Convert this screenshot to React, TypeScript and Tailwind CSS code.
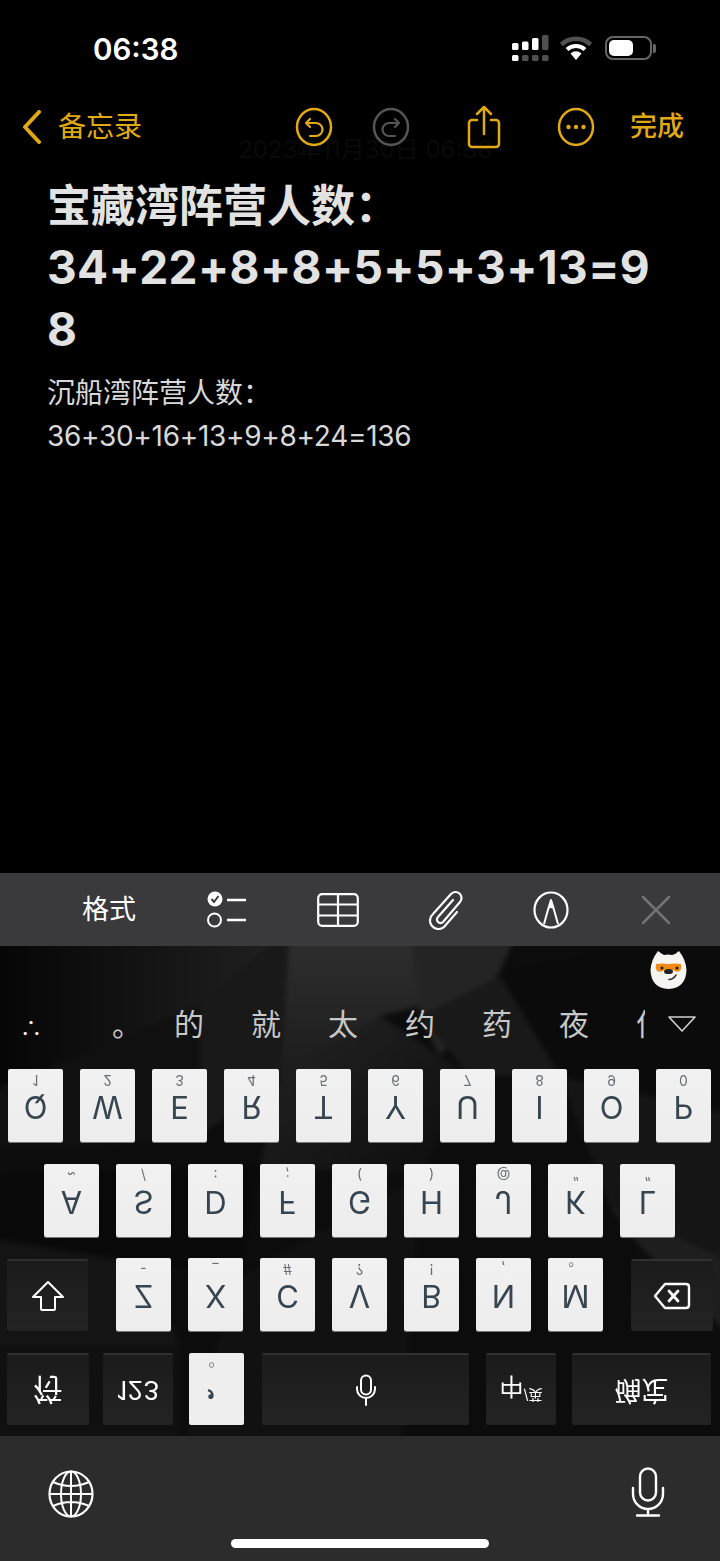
const Y = "#e2a916";
const font = { fontFamily: '"Inter","Noto Sans CJK SC",sans-serif' };

function Key({ main, hint }: { main: string; hint: string }) {
  return (
    <div className="relative w-[55px] h-[73px] rounded-[2px] bg-gradient-to-b from-[#f1f1f1] to-[#ededed] shadow-[0_1px_0_#777] flex flex-col items-center">
      <span className="-scale-y-100 h-[20px] leading-[20px] mt-[1px] text-[14px] text-[#6a6f74]">{hint}</span>
      <span className="-scale-y-100 h-[34px] leading-[34px] text-[31px] text-[#36454f] font-normal">{main}</span>
    </div>
  );
}

function Dark({ children, cls }: { children: React.ReactNode; cls: string }) {
  return (
    <div className={`h-[72px] rounded-[2px] bg-gradient-to-b from-[#1b1b1b] to-[#232323] border-t-2 border-[#303030] flex items-center justify-center text-white ${cls}`}>
      {children}
    </div>
  );
}

export default function App() {
  const r1 = [["Q", "1"], ["W", "2"], ["E", "3"], ["R", "4"], ["T", "5"], ["Y", "6"], ["U", "7"], ["I", "8"], ["O", "9"], ["P", "0"]];
  const r2 = [["A", "~"], ["S", "/"], ["D", ":"], ["F", ";"], ["G", "("], ["H", ")"], ["J", "@"], ["K", "“"], ["L", "”"]];
  const r3 = [["Z", "-"], ["X", "_"], ["C", "#"], ["V", "?"], ["B", "!"], ["N", ","], ["M", "。"]];
  return (
    <div className="w-[720px] h-[1561px] bg-black flex flex-col overflow-hidden relative" style={font}>
      {/* status bar */}
      <div className="h-[97px] flex items-start shrink-0">
        <div className="ml-[93px] mt-[30px] text-[29.5px] leading-[38px] font-semibold text-white">06:38</div>
        <div className="ml-auto mr-[64px] mt-[35px] flex items-center">
          <svg width="37" height="26" viewBox="0 0 37 26">
            <rect x="0" y="8" width="6.5" height="7" rx="1.5" fill="#fff" />
            <rect x="10" y="6.5" width="6.5" height="8.5" rx="1.5" fill="#fff" />
            <rect x="20" y="3" width="6.5" height="12" rx="1.5" fill="#fff" />
            <rect x="30" y="0" width="6.5" height="15" rx="1.5" fill="#505050" />
            <rect x="0" y="20" width="6.5" height="6" rx="1.5" fill="#fff" />
            <rect x="10" y="20" width="6.5" height="6" rx="1.5" fill="#505050" />
            <rect x="20" y="20" width="6.5" height="6" rx="1.5" fill="#505050" />
            <rect x="30" y="20" width="6.5" height="6" rx="1.5" fill="#505050" />
          </svg>
          <svg width="32" height="24" viewBox="0 0 32 24" className="ml-[11px]">
            <path d="M1.5 8.5 A21 21 0 0 1 30.5 8.5" fill="none" stroke="#505050" strokeWidth="4.5" />
            <path d="M7 13.5 A13 13 0 0 1 25 13.5" fill="none" stroke="#fff" strokeWidth="4" />
            <path d="M16 24 L10.5 17.5 A8 8 0 0 1 21.5 17.5 Z" fill="#fff" />
          </svg>
          <div className="flex items-center ml-[13px]">
            <div className="w-[47px] h-[24px] rounded-[8px] border-2 border-[#666] p-[2px]">
              <div className="w-[24px] h-full rounded-[5px] bg-white" />
            </div>
            <div className="w-[3px] h-[9px] rounded-r-[2px] bg-[#666] ml-[1px]" />
          </div>
        </div>
      </div>

      {/* faint date under the nav */}
      <div className="absolute left-[238px] top-[135px] text-[24px] leading-[30px] text-[#0a0a0a] whitespace-nowrap">2023年11月30日 06:38</div>

      {/* nav */}
      <div className="h-[60px] shrink-0 flex items-center relative" style={{ color: Y }}>
        <svg width="20" height="34" viewBox="0 0 20 34" className="ml-[22px]">
          <path d="M17 2 L3 17 L17 32" fill="none" stroke={Y} strokeWidth="4" strokeLinecap="round" strokeLinejoin="round" />
        </svg>
        <span className="ml-[16px] text-[28px] leading-[36px] w-[84px] whitespace-nowrap">备忘录</span>
        <svg width="38" height="40" viewBox="0 0 38 40" className="ml-[153px]">
          <ellipse cx="19" cy="20" rx="17" ry="18" fill="none" stroke={Y} strokeWidth="2.5" />
          <path d="M15 12 L11 16 L15 20 M11 16 H21 A6.5 6.5 0 0 1 21 29 H15" fill="none" stroke={Y} strokeWidth="2.2" strokeLinecap="round" strokeLinejoin="round" />
        </svg>
        <svg width="38" height="40" viewBox="0 0 38 40" className="ml-[39px]">
          <ellipse cx="19" cy="20" rx="17" ry="18" fill="none" stroke="#555" strokeWidth="2.5" />
          <path d="M23 12 L27 16 L23 20 M27 16 H17 A6.5 6.5 0 0 0 17 29 H23" fill="none" stroke="#555" strokeWidth="2.2" strokeLinecap="round" strokeLinejoin="round" />
        </svg>
        <svg width="34" height="44" viewBox="0 0 34 44" className="ml-[57px]">
          <path d="M10 15 H5 A3 3 0 0 0 2 18 V39 A3 3 0 0 0 5 42 H29 A3 3 0 0 0 32 39 V18 A3 3 0 0 0 29 15 H24 M17 29 V2 M10 9 L17 2 L24 9" fill="none" stroke={Y} strokeWidth="2.5" strokeLinecap="round" strokeLinejoin="round" />
        </svg>
        <svg width="38" height="40" viewBox="0 0 38 40" className="ml-[56px]">
          <ellipse cx="19" cy="20" rx="17" ry="18" fill="none" stroke={Y} strokeWidth="2.5" />
          <circle cx="11.5" cy="20" r="2.2" fill={Y} />
          <circle cx="19" cy="20" r="2.2" fill={Y} />
          <circle cx="26.5" cy="20" r="2.2" fill={Y} />
        </svg>
        <span className="ml-[35px] text-[27px] leading-[36px] font-medium whitespace-nowrap">完成</span>
      </div>

      {/* note */}
      <div className="pl-[47px] w-[657px] pt-[18px] flex-1 min-h-0 text-[#e2e2e2] break-all">
        <div className="text-[44px] leading-[62px] font-bold">宝藏湾阵营人数：</div>
        <div className="text-[46px] leading-[62px] font-bold tracking-[0.4px] -mt-[1px]">34+22+8+8+5+5+3+13=98</div>
        <div className="text-[28px] leading-[43px] mt-[12px] text-[#d8d8d8]">沉船湾阵营人数：</div>
        <div className="text-[28px] leading-[43px] text-[#d8d8d8] tracking-[-0.3px]">36+30+16+13+9+8+24=136</div>
      </div>

      {/* toolbar */}
      <div className="h-[73px] shrink-0 bg-[#3a3a3c] flex items-center text-white">
        <span className="ml-[82px] text-[27px] leading-[36px] whitespace-nowrap">格式</span>
        <svg width="42" height="38" viewBox="0 0 42 38" className="ml-[70px]">
          <circle cx="9" cy="8" r="7.5" fill="#fff" />
          <path d="M5.5 8 L8 11 L12.5 5" fill="none" stroke="#3a3a3c" strokeWidth="2" />
          <circle cx="8.5" cy="29" r="6.5" fill="none" stroke="#fff" strokeWidth="2" />
          <path d="M21 9 H40 M21 29 H40" stroke="#fff" strokeWidth="2.5" />
        </svg>
        <svg width="42" height="34" viewBox="0 0 42 34" className="ml-[69px]">
          <rect x="1.2" y="1.2" width="39.6" height="31.6" rx="4" fill="none" stroke="#fff" strokeWidth="2.2" />
          <path d="M1 11.5 H41 M1 22.5 H41 M21 1 V33" stroke="#fff" strokeWidth="2.2" />
        </svg>
        <svg width="36" height="40" viewBox="0 0 36 40" className="ml-[69px]">
          <path d="M25 10 L10 27 A3.5 3.5 0 0 0 15 32 L32 12 A6 6 0 0 0 23 4 L5 24 A8 8 0 0 0 16 37 L29 22" fill="none" stroke="#fff" strokeWidth="2.2" strokeLinecap="round" />
        </svg>
        <svg width="36" height="38" viewBox="0 0 36 38" className="ml-[69px]">
          <ellipse cx="18" cy="19" rx="16.5" ry="17.5" fill="none" stroke="#fff" strokeWidth="2.2" />
          <path d="M11 33 L15.5 17 L18 9 L20.5 17 L25 33 M15.5 17 Q18 15 20.5 17" fill="none" stroke="#fff" strokeWidth="2" strokeLinejoin="round" />
          <path d="M18 9 L15.5 17 Q18 15 20.5 17 Z" fill="#fff" />
        </svg>
        <svg width="30" height="30" viewBox="0 0 30 30" className="ml-[72px]">
          <path d="M2 2 L28 28 M28 2 L2 28" stroke="#737373" strokeWidth="2.5" strokeLinecap="round" />
        </svg>
      </div>

      {/* keyboard */}
      <div className="h-[490px] shrink-0 relative bg-[#0c0c0c] overflow-hidden">
        <svg width="720" height="490" viewBox="0 0 720 490" className="absolute inset-0">
          <defs>
            <linearGradient id="a" x1="0" y1="0" x2="0" y2="1"><stop offset="0" stopColor="#303030" /><stop offset="1" stopColor="#1c1c1c" /></linearGradient>
            <linearGradient id="b" x1="0" y1="0" x2="1" y2="1"><stop offset="0" stopColor="#242424" /><stop offset="1" stopColor="#0c0c0c" /></linearGradient>
            <linearGradient id="c" x1="0" y1="0" x2="1" y2="0"><stop offset="0" stopColor="#040404" /><stop offset="1" stopColor="#222222" /></linearGradient>
          </defs>
          <g style={{ filter: "blur(2.5px)" }}>
            <rect x="-20" y="-20" width="760" height="530" fill="#0c0c0c" />
            <polygon points="-20,-20 300,-20 200,60 -20,150" fill="url(#c)" />
            <polygon points="290,-20 410,-20 420,60 380,70 280,130" fill="url(#a)" />
            <polygon points="410,-20 520,-20 500,25 440,110 420,70" fill="#242424" />
            <polygon points="500,25 740,-20 740,170 560,130" fill="#0b0b0b" />
            <polygon points="420,70 500,30 560,130 470,130" fill="#191919" />
            <polygon points="200,60 290,-20 280,130 200,190" fill="#191919" />
            <polygon points="-20,150 200,60 200,190 100,200 -20,200" fill="#101010" />
            <polygon points="280,130 380,70 470,130 420,230 260,220" fill="url(#b)" />
            <polygon points="560,130 740,170 740,330 610,260" fill="#151515" />
            <polygon points="-20,230 260,220 240,330 -20,290" fill="#090909" />
            <polygon points="-20,290 150,320 180,400 -20,400" fill="#141414" />
            <polygon points="420,230 610,260 740,330 740,510 400,510" fill="#0c0c0c" />
            <polygon points="610,260 740,320 740,400 640,300" fill="#1e1e1e" />
            <polygon points="240,330 420,230 400,510 180,510" fill="#111111" />
            <polygon points="-20,400 180,400 180,510 -20,510" fill="#101010" />
          </g>
        </svg>

        <div className="relative flex flex-col h-full">
          {/* mascot */}
          <div className="absolute left-[650px] top-[4px]">
            <svg width="37" height="40" viewBox="0 0 37 40">
              <path d="M8 1 Q12 4 14 5 Q18 4 22 5 Q26 4 29 1 Q36 10 36.5 20 Q36 38 18.5 39 Q1 38 0.5 20 Q1 10 8 1 Z" fill="#f6f4f0" />
              <path d="M6 14 Q12 13 18 14 Q25 13 31 14 Q32 18 30 21 Q26 23 23 20 H14 Q11 23 7 21 Q5 18 6 14 Z" fill="#f08a14" />
              <circle cx="12" cy="18" r="1.5" fill="#1a1a1a" />
              <circle cx="27" cy="18" r="1.5" fill="#1a1a1a" />
              <ellipse cx="18.5" cy="21.5" rx="4.5" ry="2.6" fill="#222" />
              <path d="M26 25 Q24 29 19 29.5" fill="none" stroke="#222" strokeWidth="1.5" strokeLinecap="round" />
            </svg>
          </div>

          {/* candidates */}
          <div className="h-[123px] shrink-0 flex items-end relative">
            <div className="h-[40px] flex items-center text-[30px] leading-[40px] text-[#c8c8c8] w-full mb-[25px]">
              <span className="absolute left-[20px] top-[62px] text-white text-[22px]">∴</span>
              <span className="absolute left-[112px] top-[59px]">。</span>
              <div className="ml-[174px] w-[471px] overflow-hidden flex gap-[47px] whitespace-nowrap">
                {["的", "就", "太", "约", "药", "夜", "何"].map((c) => (
                  <span key={c} className="shrink-0 w-[30px]">{c}</span>
                ))}
              </div>
              <svg width="30" height="18" viewBox="0 0 30 18" className="ml-[22px]">
                <path d="M2 2 H28 L15 16 Z" fill="none" stroke="#d0d0d0" strokeWidth="1.6" strokeLinejoin="round" />
              </svg>
            </div>
          </div>

          {/* letter rows */}
          <div className="flex gap-[17px] pl-[8px] shrink-0">
            {r1.map(([m, h]) => <Key key={m} main={m} hint={h} />)}
          </div>
          <div className="flex gap-[17px] pl-[44px] mt-[22px] shrink-0">
            {r2.map(([m, h]) => <Key key={m} main={m} hint={h} />)}
          </div>
          <div className="flex mt-[21px] pl-[7px] shrink-0">
            <Dark cls="w-[81px] mt-[1px]">
              <svg width="34" height="32" viewBox="0 0 34 32">
                <path d="M17 2 L32 17 H24 V29 Q24 30 23 30 H11 Q10 30 10 29 V17 H2 Z" fill="none" stroke="#fff" strokeWidth="2" strokeLinejoin="round" />
              </svg>
            </Dark>
            <div className="flex gap-[17px] ml-[28px]">
              {r3.map(([m, h]) => <Key key={m} main={m} hint={h} />)}
            </div>
            <Dark cls="w-[82px] ml-[28px] mt-[1px]">
              <svg width="38" height="28" viewBox="0 0 38 28">
                <path d="M12 2 H33 Q36 2 36 5 V23 Q36 26 33 26 H12 L2 14 Z" fill="none" stroke="#fff" strokeWidth="2.4" strokeLinejoin="round" />
                <path d="M16 9 L25 19 M25 9 L16 19" stroke="#fff" strokeWidth="2.8" strokeLinecap="round" />
              </svg>
            </Dark>
          </div>
          <div className="flex mt-[22px] pl-[7px] shrink-0">
            <Dark cls="w-[82px]"><span className="-scale-y-100 text-[30px] leading-[36px]">符</span></Dark>
            <Dark cls="w-[70px] ml-[14px]"><span className="-scale-y-100 text-[26px] leading-[36px]">123</span></Dark>
            <div className="w-[55px] h-[72px] ml-[16px] rounded-[2px] bg-[#eeeeee] flex flex-col items-center">
              <span className="-scale-y-100 h-[30px] leading-[30px] mt-[2px] text-[16px] text-[#777]">。</span>
              <span className="-scale-y-100 h-[30px] leading-[30px] text-[26px] font-bold text-[#36454f] mt-[2px]">，</span>
            </div>
            <Dark cls="w-[207px] ml-[18px]">
              <svg width="22" height="32" viewBox="0 0 22 32">
                <rect x="6" y="1.5" width="10" height="19" rx="5" fill="none" stroke="#fff" strokeWidth="2" />
                <path d="M2 13 V15 A9 9 0 0 0 20 15 V13 M11 24 V31" fill="none" stroke="#fff" strokeWidth="2" strokeLinecap="round" />
              </svg>
            </Dark>
            <Dark cls="w-[70px] ml-[17px]">
              <span className="-scale-y-100 text-[24px] leading-[30px] -mt-[8px]">中</span>
              <span className="-scale-y-100 text-[14px] leading-[16px] mt-[10px]">/英</span>
            </Dark>
            <Dark cls="w-[139px] ml-[16px]"><span className="-scale-y-100 text-[27px] leading-[36px] whitespace-nowrap">确定</span></Dark>
          </div>
        </div>
      </div>

      {/* bottom */}
      <div className="h-[125px] shrink-0 bg-[#2c2c2c] relative flex items-start">
        <svg width="46" height="48" viewBox="0 0 46 48" className="ml-[48px] mt-[34px]">
          <ellipse cx="23" cy="24" rx="21.5" ry="22.5" fill="none" stroke="#fff" strokeWidth="2.2" />
          <ellipse cx="23" cy="24" rx="10" ry="22.5" fill="none" stroke="#fff" strokeWidth="2" />
          <path d="M23 1.5 V46.5 M1.5 24 H44.5 M5 12 Q23 20 41 12 M5 36 Q23 28 41 36" fill="none" stroke="#fff" strokeWidth="2" />
        </svg>
        <svg width="34" height="50" viewBox="0 0 34 50" className="ml-[537px] mt-[31px]">
          <rect x="9" y="1.5" width="16" height="32" rx="8" fill="none" stroke="#fff" strokeWidth="2.4" />
          <path d="M2 21 V27 A15 15 0 0 0 32 27 V21 M17 42 V48 M6 48.5 H28" fill="none" stroke="#fff" strokeWidth="2.4" strokeLinecap="round" />
        </svg>
        <div className="absolute left-[231px] top-[103px] w-[258px] h-[9px] rounded-full bg-white" />
      </div>
    </div>
  );
}
